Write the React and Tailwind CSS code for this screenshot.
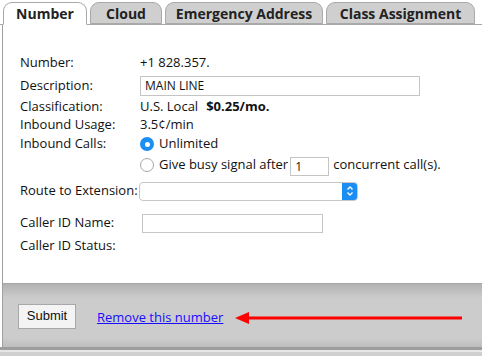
import React from "react";

const F = { fontFamily: '"Open Sans", "Noto Sans", Arial, sans-serif' };

function Tab({ label, active, w }) {
  return (
    <div
      className={
        "h-[22px] mr-[3px] flex items-center justify-center rounded-t-[9px] border border-[#a9a9a9] text-[14px] font-bold text-[#222] " +
        (active ? "bg-white border-b-white -mb-px h-[23px]" : "bg-[#cfcfcf]")
      }
      style={{ width: w }}
    >
      {label}
    </div>
  );
}

function Row({ label, children, h, mt = 0 }) {
  return (
    <div className="flex items-center" style={{ height: h, marginTop: mt }}>
      <div className="w-[120px] shrink-0">{label}</div>
      <div className="flex items-center">{children}</div>
    </div>
  );
}

export default function App() {
  return (
    <div className="w-[482px] h-[356px] bg-white overflow-hidden text-[13px] text-[#111]" style={F}>
      <div className="flex items-end pl-[3px] pt-[3px] border-b border-[#a9a9a9] h-[25px]">
        <Tab label="Number" active w={84} />
        <Tab label="Cloud" w={72} />
        <Tab label="Emergency Address" w={158} />
        <Tab label="Class Assignment" w={149} />
      </div>
      <div className="ml-[2px] border-l border-[#a0a0a0]">
        <div className="h-[258px] pl-[17px] pt-[28px]">
          <Row label="Number:" h={20}>+1 828.357.</Row>
          <Row label="Description:" h={26}>
            <div className="w-[280px] h-[20px] border border-[#c4c4c4] px-[4px] flex items-center text-[12px]">MAIN LINE</div>
          </Row>
          <Row label="Classification:" h={16}>
            U.S. Local<span className="font-bold ml-[8px]">$0.25/mo.</span>
          </Row>
          <Row label="Inbound Usage:" h={20}>3.5¢/min</Row>
          <Row label="Inbound Calls:" h={18}>
            <span className="w-[14px] h-[14px] rounded-full bg-[#1b8ef3] flex items-center justify-center mr-[5px]">
              <span className="w-[5px] h-[5px] rounded-full bg-white" />
            </span>
            Unlimited
          </Row>
          <Row label="" h={24}>
            <span className="w-[14px] h-[14px] rounded-full border border-[#a6a6a6] bg-white mr-[5px]" />
            Give busy signal after
            <span className="w-[39px] h-[19px] border border-[#c4c4c4] ml-[2px] px-[4px] flex items-center text-[12px] mt-[3px]">1</span>
            <span className="ml-[4px]">concurrent call(s).</span>
          </Row>
          <Row label="Route to Extension:" h={28}>
            <div className="w-[219px] h-[19px] border border-[#c6c6c6] rounded-[4px] flex justify-end overflow-hidden -ml-[1px]">
              <div className="w-[15px] h-full bg-[#1b8ef3] flex items-center justify-center">
                <svg width="8" height="12" viewBox="0 0 8 12" fill="none" stroke="white" strokeWidth="1.4">
                  <path d="M1.5 4.5 L4 2 L6.5 4.5" />
                  <path d="M1.5 7.5 L4 10 L6.5 7.5" />
                </svg>
              </div>
            </div>
          </Row>
          <Row label="Caller ID Name:" h={20} mt={8}>
            <div className="w-[181px] h-[19px] border border-[#c6c6c6] ml-[2px]" />
          </Row>
          <Row label="Caller ID Status:" h={24} mt={1}></Row>
        </div>
        <div className="h-[64px] border-t border-[#a6a6a6] bg-[linear-gradient(#b2b2b2,#cccccc_14px,#cccccc_54px,#bdbdbd)] flex items-center pl-[15px] pt-[1px]">
          <div className="w-[58px] h-[25px] border border-[#a8a8a8] bg-[#f4f4f4] flex items-center justify-center text-[13px]" style={{ fontFamily: '"Liberation Sans", Arial, sans-serif' }}>
            Submit
          </div>
          <a className="ml-[21px] text-[#1a0dff] underline text-[13px] mt-[3px]">Remove this number</a>
          <svg className="ml-[12px] mt-[3px]" width="230" height="12" viewBox="0 0 230 12">
            <path d="M10 6 H227" stroke="#ff0000" strokeWidth="3" />
            <path d="M0 6 L14 0 L14 12 Z" fill="#ff0000" />
          </svg>
        </div>
      </div>
      <div className="h-[3px] bg-[#9d9d9d]" />
      <div className="h-[2px] bg-[#e6e6e6]" />
      <div className="h-[10px] bg-[#d0d0d0]" />
    </div>
  );
}
